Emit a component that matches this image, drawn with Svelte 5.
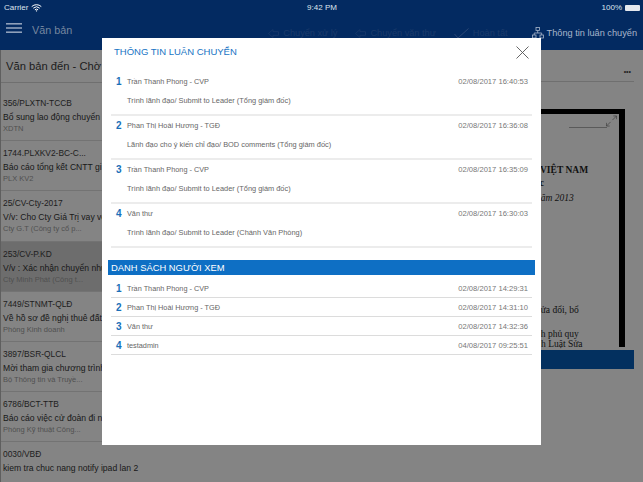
<script>
  const docs = [
    { code: '356/PLXTN-TCCB', title: 'Bổ sung lao động chuyển đổi', org: 'XDTN' },
    { code: '1744.PLXKV2-BC-C...', title: 'Báo cáo tổng kết CNTT gi', org: 'PLX KV2' },
    { code: '25/CV-Cty-2017', title: 'V/v: Cho Cty Giá Trị vay vốn', org: 'Cty G.T (Công ty cổ p...' },
    { code: '253/CV-P.KD', title: 'V/v : Xác nhận chuyển nhượng', org: 'Cty Minh Phát (Công t...', selected: true },
    { code: '7449/STNMT-QLĐ', title: 'Về hồ sơ đề nghị thuê đất', org: 'Phòng Kinh doanh' },
    { code: '3897/BSR-QLCL', title: 'Mời tham gia chương trình', org: 'Bộ Thông tin và Truyề...' },
    { code: '6786/BCT-TTB', title: 'Báo cáo việc cử đoàn đi nước', org: 'Phòng Kỹ thuật Công...' },
    { code: '0030/VBĐ', title: 'kiem tra chuc nang notify ipad lan 2', org: '' }
  ]

  const history = [
    { name: 'Trần Thanh Phong - CVP', time: '02/08/2017 16:40:53', note: 'Trình lãnh đạo/ Submit to Leader (Tổng giám đốc)' },
    { name: 'Phan Thị Hoài Hương - TGĐ', time: '02/08/2017 16:36:08', note: 'Lãnh đạo cho ý kiến chỉ đạo/ BOD comments (Tổng giám đốc)' },
    { name: 'Trần Thanh Phong - CVP', time: '02/08/2017 16:35:09', note: 'Trình lãnh đạo/ Submit to Leader (Tổng giám đốc)' },
    { name: 'Văn thư', time: '02/08/2017 16:30:03', note: 'Trình lãnh đạo/ Submit to Leader (Chánh Văn Phòng)' }
  ]

  const viewers = [
    { name: 'Trần Thanh Phong - CVP', time: '02/08/2017 14:29:31' },
    { name: 'Phan Thị Hoài Hương - TGĐ', time: '02/08/2017 14:31:10' },
    { name: 'Văn thư', time: '02/08/2017 14:32:36' },
    { name: 'testadmin', time: '04/08/2017 09:25:51' }
  ]
</script>

<div class="page">
  <header class="status">
    <span class="carrier">
      Carrier
      <svg width="11" height="8" viewBox="0 0 11 8" fill="none" stroke="#fff" stroke-width="1">
        <path d="M.7 2.6a7 7 0 0 1 9.6 0M2.300 4.200a4.700 4.700 0 0 1 6.400 0M3.900 5.800a2.400 2.400 0 0 1 3.200 0" />
        <path d="M5.500 7.800 4.600 6.800a1.300 1.300 0 0 1 1.800 0z" fill="#fff" stroke="none" />
      </svg>
    </span>
    <span class="clock">9:42 PM</span>
    <span class="battery">100% <i></i></span>
  </header>

  <nav class="toolbar">
    <svg class="burger" width="16" height="10" viewBox="0 0 16 10" fill="#8fa0ba">
      <rect width="16" height="1.600" /><rect y="4.200" width="16" height="1.600" /><rect y="8.400" width="16" height="1.600" />
    </svg>
    <span class="section">Văn bản</span>
    <div class="actions">
      <span class="dim">
        <svg width="11" height="9" viewBox="0 0 11 9" fill="none" stroke="#1b3a6b" stroke-width=".8"><path d="M.5 4.500 5 .5v2.200h5.500v3.600H5v2.200z" /></svg>
        Chuyển xử lý
      </span>
      <span class="dim">
        <svg width="11" height="9" viewBox="0 0 11 9" fill="none" stroke="#1b3a6b" stroke-width=".8"><path d="M.5 4.500 5 .5v2.200h5.500v3.600H5v2.200z" /></svg>
        Chuyển văn thư
      </span>
      <span class="dim">
        <svg width="15" height="11" viewBox="0 0 15 11" fill="none" stroke="#2b4675"><path d="M.5 6 4 10 14.500.5" /></svg>
        Hoàn tất
      </span>
      <span class="on">
        <svg width="12" height="12" viewBox="0 0 12 12" fill="none" stroke="#a9b6cb" stroke-width=".8">
          <rect x="4" y=".5" width="3.500" height="3" /><rect x=".5" y="8" width="3.500" height="3" /><rect x="8" y="8" width="3.500" height="3" />
          <path d="M5.700 3.500v2.500M2.200 8V6h7.500v2" />
        </svg>
        Thông tin luân chuyển
      </span>
    </div>
  </nav>

  <main class="body">
    <aside class="list">
      <h2>Văn bản đến - Chờ xử lý</h2>
      <div class="rows">
        {#each docs as doc}
          <div class="row" class:selected={doc.selected}>
            <div class="code">{doc.code}</div>
            <div class="title">{doc.title}</div>
            <div class="org">{doc.org}</div>
          </div>
        {/each}
      </div>
    </aside>
    <section class="detail">
      <div class="detail-head">•••</div>
      <div class="viewer">
        <div class="sheet">
          <svg class="expand" width="11" height="12" viewBox="0 0 12 12" fill="none" stroke="#444" stroke-width=".8">
            <path d="M7 5l4.500-4.500M8 .5h3.500V4M5 7 .5 11.500M.5 8v3.500H4" />
          </svg>
          <div class="rule"></div>
          <div class="nation">VIỆT NAM</div>
          <div class="nation under">ọc</div>
          <div class="date">năm 2013</div>
          <div class="para first">sửa đổi, bổ</div>
          <div class="para second">nh phủ quy</div>
          <div class="para third">h Luật Sửa</div>
        </div>
        <div class="bar"></div>
      </div>
    </section>
  </main>

  <div class="dialog">
    <div class="dialog-head">
      <h1>THÔNG TIN LUÂN CHUYỂN</h1>
      <svg width="13" height="13" viewBox="0 0 13 13" stroke="#555" stroke-width=".9">
        <path d="M.5.500l12 12M12.500.500l-12 12" />
      </svg>
    </div>
    <div class="entries">
      {#each history as item, i}
        <div class="entry">
          <div class="line">
            <span class="num">{i + 1}</span>
            <span class="name">{item.name}</span>
            <span class="time">{item.time}</span>
          </div>
          <div class="note">{item.note}</div>
        </div>
      {/each}
    </div>
    <h3>DANH SÁCH NGƯỜI XEM</h3>
    <div class="seen">
      {#each viewers as item, i}
        <div class="line seen-row">
          <span class="num">{i + 1}</span>
          <span class="name">{item.name}</span>
          <span class="time">{item.time}</span>
        </div>
      {/each}
    </div>
  </div>
</div>

<style>
  :global(body) {
    margin: 0;
  }
  .page {
    position: relative;
    display: flex;
    flex-direction: column;
    width: 643px;
    height: 482px;
    overflow: hidden;
    background: #848484;
    font-family: 'Liberation Sans', Arial, sans-serif;
    color: #222;
  }

  .status {
    display: grid;
    grid-template-columns: 1fr auto 1fr;
    align-items: center;
    height: 15px;
    padding: 0 3px 0 4px;
    background: #032a61;
    color: #dfe4ec;
    font-size: 8px;
  }
  .carrier {
    display: flex;
    align-items: center;
    gap: 3px;
  }
  .battery {
    display: flex;
    align-items: center;
    justify-content: flex-end;
    gap: 3px;
  }
  .battery i {
    width: 15px;
    height: 6px;
    border-radius: 1px;
    background: #e4e8ee;
  }

  .toolbar {
    display: flex;
    align-items: center;
    height: 35px;
    padding: 0 6px;
    background: #032a61;
  }
  .burger {
    margin-bottom: 9px;
  }
  .section {
    margin-left: 10px;
    margin-bottom: 5px;
    color: #76879f;
    font-size: 10.800px;
  }
  .actions {
    display: flex;
    align-items: center;
    gap: 18px;
    margin-left: auto;
    margin-top: 1px;
    font-size: 9.200px;
  }
  .dim {
    display: flex;
    align-items: center;
    gap: 4px;
    color: #1b3a6b;
    white-space: nowrap;
  }
  .on {
    display: flex;
    align-items: center;
    gap: 3px;
    margin-left: 6px;
    color: #a9b6cb;
    white-space: nowrap;
  }

  .body {
    display: flex;
    flex: 1;
    min-height: 0;
  }
  .list {
    flex: none;
    width: 190px;
    border-left: 1px solid #5f5f5f;
    box-sizing: border-box;
  }
  .list h2 {
    margin: 0;
    height: 32px;
    line-height: 32px;
    padding-left: 5px;
    font-size: 11.200px;
    font-weight: 400;
    white-space: nowrap;
    color: #1c1c1c;
    border-bottom: 1px solid #6f6f6f;
  }
  .rows {
    padding-top: 15px;
  }
  .row {
    box-sizing: border-box;
    height: 50.200px;
    padding: 6px 0 0 2px;
    border-bottom: 1px solid #737373;
    white-space: nowrap;
    overflow: hidden;
  }
  .row.selected {
    background: #6d6d6d;
  }
  .rows .row:first-child {
    margin-top: -7px;
  }
  .code {
    font-size: 8.400px;
    line-height: 12px;
    color: #1d1d1d;
  }
  .title {
    margin-top: 2px;
    font-size: 8.600px;
    line-height: 13px;
    color: #181818;
  }
  .org {
    margin-top: -1px;
    font-size: 7.500px;
    line-height: 11px;
    color: #505050;
  }

  .detail {
    display: flex;
    flex: 1;
    flex-direction: column;
    min-width: 0;
  }
  .detail-head {
    height: 32px;
    margin-right: 9px;
    border-bottom: 1px solid #6f6f6f;
    text-align: right;
    padding-right: 3px;
    box-sizing: border-box;
    line-height: 44px;
    font-size: 7px;
    color: #222;
  }
  .viewer {
    display: flex;
    flex-direction: column;
    margin: 27px 9px 0 0;
  }
  .sheet {
    box-sizing: border-box;
    position: relative;
    height: 238px;
    margin-right: 9px;
    border: solid #000;
    border-width: 5px 6px 0 0;
    padding-top: 51px;
    font-family: 'Liberation Serif', 'Times New Roman', serif;
    font-size: 9.500px;
    line-height: 10px;
    color: #111;
    white-space: nowrap;
  }
  .rule {
    position: absolute;
    right: 12px;
    top: 13px;
    width: 38px;
    border-top: 1px solid #5a5a5a;
  }
  .expand {
    position: absolute;
    top: 1px;
    right: 2px;
  }
  .nation {
    padding-left: 350px;
    font-weight: 700;
  }
  .nation.under {
    margin-top: 3px;
    padding-left: 345px;
    height: 12px;
  }
  .date {
    margin-top: 3px;
    padding-left: 346px;
    font-style: italic;
  }
  .para {
    height: 11px;
  }
  .para.first {
    margin-top: 102px;
    padding-left: 347px;
  }
  .para.second {
    margin-top: 13px;
    padding-left: 346px;
  }
  .para.third {
    margin-top: -1px;
    padding-left: 351px;
  }
  .bar {
    height: 19px;
    margin-top: 3px;
    background: #03305f;
  }

  .dialog {
    position: absolute;
    left: 102px;
    top: 38px;
    display: flex;
    flex-direction: column;
    width: 439px;
    height: 407px;
    background: #fff;
    color: #666;
  }
  .dialog-head {
    display: flex;
    align-items: center;
    justify-content: space-between;
    height: 27px;
    padding: 0 12px;
  }
  .dialog-head svg {
    margin-top: 2px;
  }
  .dialog-head h1 {
    margin: 0;
    color: #1874c4;
    font-size: 9.500px;
    font-weight: 400;
  }
  .entries {
    margin: 9px 9px 0;
  }
  .entry {
    height: 42px;
    margin-bottom: 2px;
    border-bottom: 2px solid #ececec;
    box-sizing: border-box;
  }
  .line {
    display: flex;
    align-items: center;
    height: 14px;
    font-size: 7.600px;
  }
  .num {
    width: 16px;
    padding-left: 5px;
    box-sizing: border-box;
    color: #1a6fb8;
    font-size: 10px;
    font-weight: 700;
  }
  .name {
    flex: 1;
    font-size: 7.300px;
  }
  .time {
    margin-right: 4px;
    color: #777;
  }
  .note {
    margin-top: 7px;
    padding-left: 16px;
    font-size: 7.400px;
    line-height: 12px;
  }
  .dialog h3 {
    margin: 10px 6px 0;
    height: 15px;
    line-height: 15px;
    padding-left: 3px;
    background: #0e6fc4;
    color: #fff;
    font-size: 9.400px;
    font-weight: 400;
  }
  .seen {
    margin: 4px 9px 0;
  }
  .seen-row {
    height: 19px;
    border-bottom: 1px solid #dcdcdc;
    box-sizing: border-box;
  }
</style>
